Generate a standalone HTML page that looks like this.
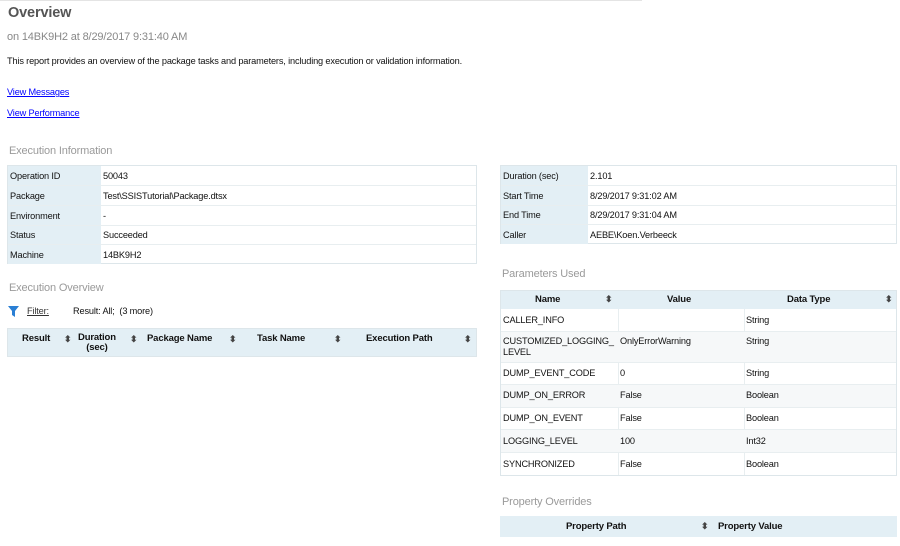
<!DOCTYPE html>
<html><head><meta charset="utf-8"><style>
*{margin:0;padding:0;box-sizing:border-box}
body{width:900px;height:546px;background:#fff;position:relative;overflow:hidden;font-family:"Liberation Sans",sans-serif;font-size:9.2px;color:#111;letter-spacing:-0.15px}
.a{position:absolute;white-space:nowrap}
.h{color:#9a9a9a;font-size:11px}
.lnk{color:#00f;text-decoration:underline}
.tb{position:absolute;border:1px solid #dde6ea;background:#fff}
.row{position:absolute;left:0;right:0;border-bottom:1px solid #e8eef0}
.lab{position:absolute;top:0;bottom:0;left:0;background:#e3eff5;padding-left:2px;display:flex;align-items:center}
.val{position:absolute;top:0;bottom:0;display:flex;align-items:center;padding-left:2px}
.hd{position:absolute;background:#e3eff5;font-weight:bold;font-size:9.5px}
.s{position:absolute;font-size:9px;color:#444}
.c{position:absolute;display:flex;align-items:center}
</style></head><body>
<div class="a" style="left:0;top:0;width:642px;height:1px;background:#e4e4e4"></div>
<div class="a" style="left:8px;top:5px;font-size:14.5px;font-weight:bold;color:#555">Overview</div>
<div class="a" style="left:7px;top:31px;font-size:11px;color:#888">on 14BK9H2 at 8/29/2017 9:31:40 AM</div>
<div class="a" style="left:7px;top:56px">This report provides an overview of the package tasks and parameters, including execution or validation information.</div>
<div class="a lnk" style="left:7px;top:87px">View Messages</div>
<div class="a lnk" style="left:7px;top:108px">View Performance</div>
<div class="a h" style="left:9px;top:145px">Execution Information</div>

<div class="tb" style="left:7px;top:165px;width:470px;height:99px">
<div class="row" style="top:0;height:20px"><div class="lab" style="width:93px">Operation ID</div><div class="val" style="left:93px">50043</div></div>
<div class="row" style="top:20px;height:20px"><div class="lab" style="width:93px">Package</div><div class="val" style="left:93px">Test\SSISTutorial\Package.dtsx</div></div>
<div class="row" style="top:40px;height:20px"><div class="lab" style="width:93px">Environment</div><div class="val" style="left:93px">-</div></div>
<div class="row" style="top:60px;height:19px"><div class="lab" style="width:93px">Status</div><div class="val" style="left:93px">Succeeded</div></div>
<div class="row" style="top:79px;height:19px;border:0"><div class="lab" style="width:93px">Machine</div><div class="val" style="left:93px">14BK9H2</div></div>
</div>

<div class="tb" style="left:500px;top:165px;width:397px;height:79px">
<div class="row" style="top:0;height:20px"><div class="lab" style="width:87px">Duration (sec)</div><div class="val" style="left:87px">2.101</div></div>
<div class="row" style="top:20px;height:20px"><div class="lab" style="width:87px">Start Time</div><div class="val" style="left:87px">8/29/2017 9:31:02 AM</div></div>
<div class="row" style="top:40px;height:19px"><div class="lab" style="width:87px">End Time</div><div class="val" style="left:87px">8/29/2017 9:31:04 AM</div></div>
<div class="row" style="top:59px;height:19px;border:0"><div class="lab" style="width:87px">Caller</div><div class="val" style="left:87px">AEBE\Koen.Verbeeck</div></div>
</div>

<div class="a h" style="left:9px;top:282px">Execution Overview</div>
<svg class="a" style="left:8px;top:306px" width="11" height="11" viewBox="0 0 11 11"><path d="M0 0H11L7 5V11L4 9V5Z" fill="#2a7fd4"/></svg>
<div class="a" style="left:27px;top:306px;text-decoration:underline;color:#333">Filter:</div>
<div class="a" style="left:73px;top:306px">Result: All;&nbsp; (3 more)</div>
<div class="hd" style="left:7px;top:328px;width:470px;height:29px;border:1px solid #dde6ea">
<div class="a" style="left:14px;top:4px">Result</div><div class="s" style="left:56px;top:5px">⬍</div>
<div class="a" style="left:70px;top:4px;text-align:center;line-height:10px">Duration<br>(sec)</div><div class="s" style="left:122px;top:5px">⬍</div>
<div class="a" style="left:139px;top:4px">Package Name</div><div class="s" style="left:221px;top:5px">⬍</div>
<div class="a" style="left:249px;top:4px">Task Name</div><div class="s" style="left:326px;top:5px">⬍</div>
<div class="a" style="left:358px;top:4px">Execution Path</div><div class="s" style="left:456px;top:5px">⬍</div>
</div>

<div class="a h" style="left:502px;top:268px">Parameters Used</div>
<div class="tb" style="left:500px;top:290px;width:397px;height:186px">
<div class="hd" style="left:0;top:0;right:0;height:18px">
<div class="a" style="left:34px;top:3px">Name</div><div class="s" style="left:104px;top:3px">⬍</div>
<div class="a" style="left:166px;top:3px">Value</div>
<div class="a" style="left:286px;top:3px">Data Type</div><div class="s" style="left:384px;top:3px">⬍</div>
</div>
<div class="a" style="left:117px;top:18px;width:1px;bottom:0;background:#e8eef0"></div>
<div class="a" style="left:243px;top:18px;width:1px;bottom:0;background:#e8eef0"></div>
<div class="row" style="top:18px;height:23px"><div class="c" style="left:2px;top:6px">CALLER_INFO</div><div class="c" style="left:245px;top:6px">String</div></div>
<div class="row" style="top:41px;height:31px;background:#f6f8f9"><div class="a" style="left:2px;top:4px;line-height:11px">CUSTOMIZED_LOGGING_<br>LEVEL</div><div class="a" style="left:119px;top:4px">OnlyErrorWarning</div><div class="a" style="left:245px;top:4px">String</div></div>
<div class="row" style="top:72px;height:22px"><div class="c" style="left:2px;top:5px">DUMP_EVENT_CODE</div><div class="c" style="left:119px;top:5px">0</div><div class="c" style="left:245px;top:5px">String</div></div>
<div class="row" style="top:94px;height:23px;background:#f6f8f9"><div class="c" style="left:2px;top:5px">DUMP_ON_ERROR</div><div class="c" style="left:119px;top:5px">False</div><div class="c" style="left:245px;top:5px">Boolean</div></div>
<div class="row" style="top:117px;height:22px"><div class="c" style="left:2px;top:5px">DUMP_ON_EVENT</div><div class="c" style="left:119px;top:5px">False</div><div class="c" style="left:245px;top:5px">Boolean</div></div>
<div class="row" style="top:139px;height:23px;background:#f6f8f9"><div class="c" style="left:2px;top:6px">LOGGING_LEVEL</div><div class="c" style="left:119px;top:6px">100</div><div class="c" style="left:245px;top:6px">Int32</div></div>
<div class="row" style="top:162px;height:23px;border:0"><div class="c" style="left:2px;top:6px">SYNCHRONIZED</div><div class="c" style="left:119px;top:6px">False</div><div class="c" style="left:245px;top:6px">Boolean</div></div>
</div>

<div class="a h" style="left:502px;top:496px">Property Overrides</div>
<div class="hd" style="left:500px;top:516px;width:397px;height:21px">
<div class="a" style="left:66px;top:5px">Property Path</div><div class="s" style="left:201px;top:5px">⬍</div>
<div class="a" style="left:218px;top:5px">Property Value</div>
</div>
</body></html>
